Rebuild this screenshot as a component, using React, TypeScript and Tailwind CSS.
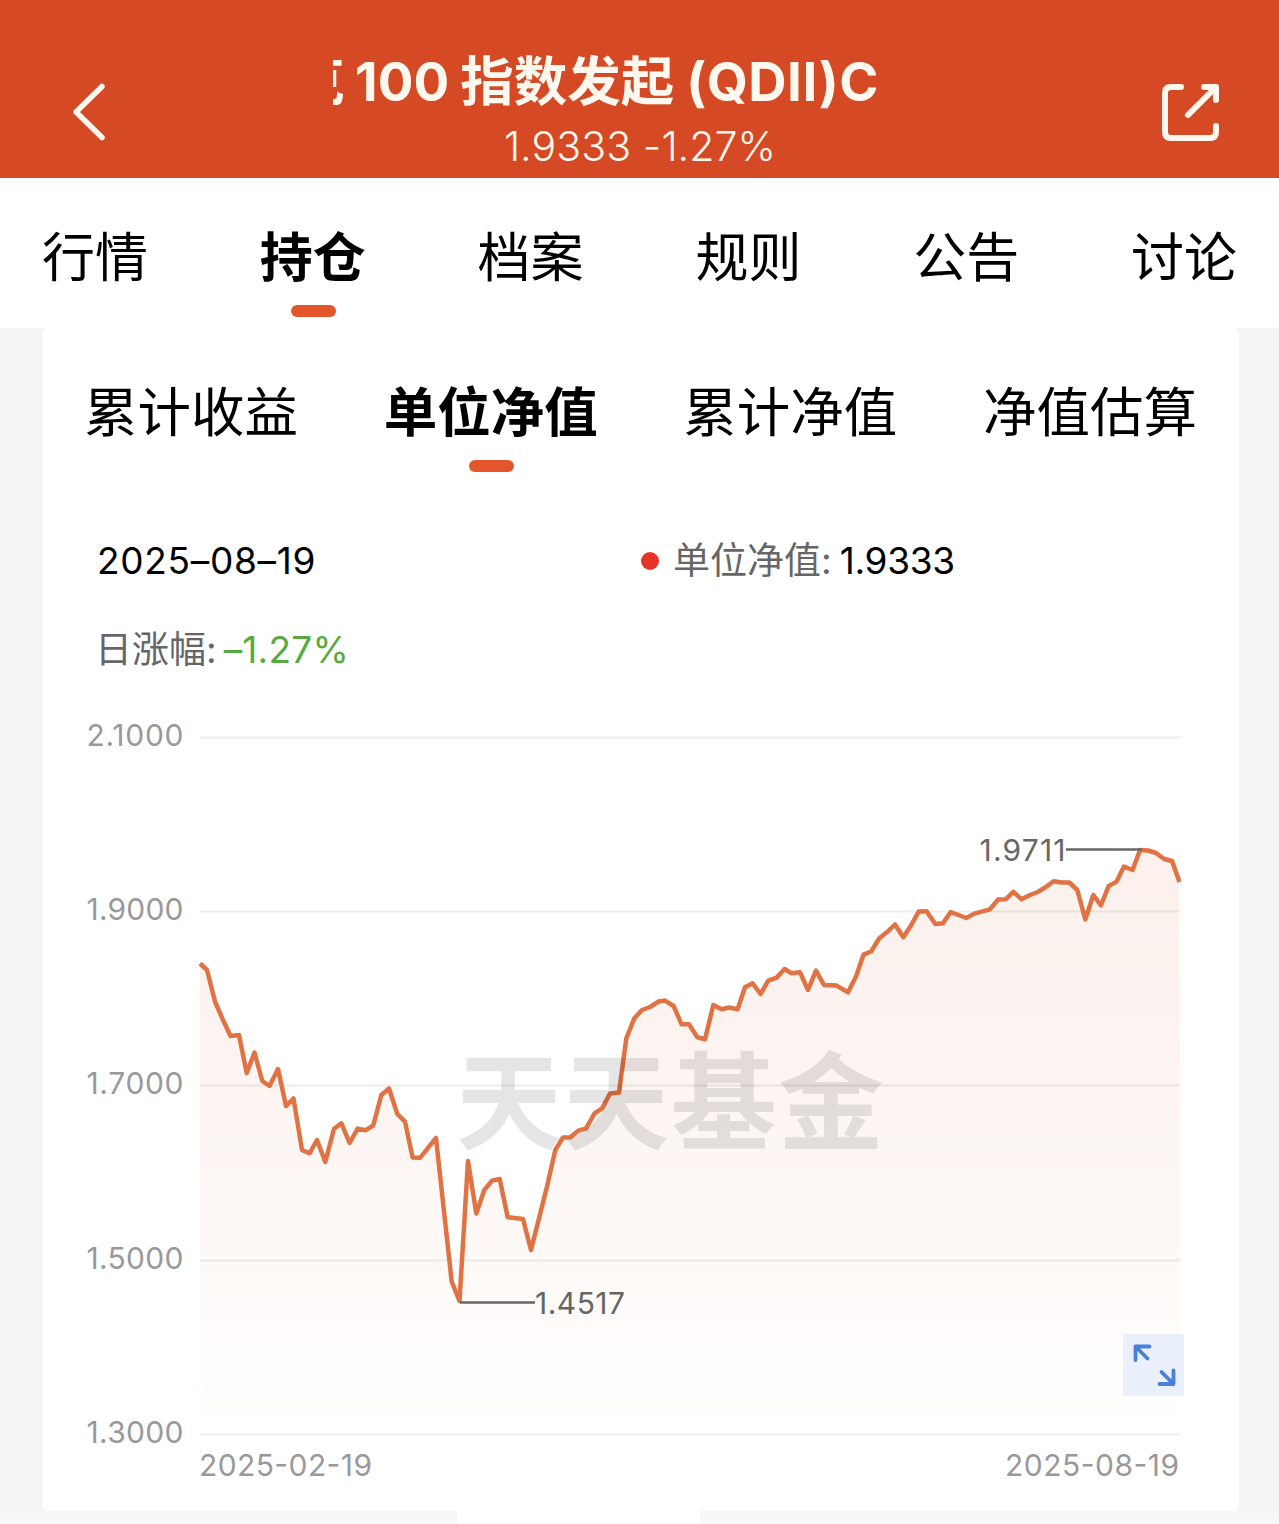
import React from "react";
import clsx from "clsx";

const TABS = ["行情", "持仓", "档案", "规则", "公告", "讨论"];
const SUB_TABS = ["累计收益", "单位净值", "累计净值", "净值估算"];

const GRID = [
  { label: "2.1000", y: 37.5 },
  { label: "1.9000", y: 211.5 },
  { label: "1.7000", y: 385.5 },
  { label: "1.5000", y: 560.5 },
  { label: "1.3000", y: 734.5 },
];

// x, y pairs in chart space
const POINTS = [
  [158, 263.5], [165, 270], [173, 301.5], [181, 320], [188.5, 336], [197, 335], [204.7, 373], [212.5, 352.5],
  [220.3, 381], [227.5, 386], [236, 369], [244, 406], [251.5, 398.5], [260, 450], [267.5, 453.3], [275, 440],
  [283.3, 462], [292, 428.7], [299.4, 423.3], [307.6, 443], [315.6, 428.6], [323.4, 430.3], [331.3, 425.3],
  [339.3, 395], [347, 388.5], [355.3, 414], [363, 421.6], [370.6, 457.5], [378, 457.8], [394, 438], [409.7, 581.7],
  [417.5, 601], [426, 461], [434.3, 513.5], [442.3, 490], [450, 480.6], [457.7, 479], [465.7, 517.3], [481, 519],
  [489, 550], [505, 486.6], [513.3, 450], [521, 437.5], [528.3, 437.3], [536.3, 430.6], [544, 428.3], [552.6, 413.3],
  [560, 408.3], [568, 393.6], [577, 392.6], [584.3, 338.3], [592.3, 318.3], [600, 310], [608, 307], [616.3, 301.6],
  [623, 300.6], [631.6, 306], [639.6, 324.3], [647, 324.3], [655.3, 337.3], [663, 339.3], [671.3, 305], [679.6, 309.3],
  [687.3, 307.5], [695.6, 309.3], [703, 287.3], [710.6, 283.3], [718.6, 294], [726.3, 280.6], [734.6, 277.6],
  [742.6, 269], [749.6, 273.3], [758, 272.3], [766, 290], [774, 270.6], [782, 285], [794.6, 285.6], [806, 292.3],
  [814, 276.6], [821.6, 254.6], [829.3, 251.3], [837.3, 238.3], [845.6, 231.6], [853, 224.5], [861.3, 237.3],
  [869.3, 225], [876.6, 211.6], [884.6, 211.3], [893.3, 224], [901, 223.3], [908.6, 212], [924.3, 218], [932.3, 213.6],
  [948, 209.3], [956, 199.6], [963.6, 199.3], [971.3, 191.8], [979.6, 199.3], [988, 195], [995.6, 192], [1003, 187.6],
  [1011.6, 181.3], [1019.6, 182.5], [1027.3, 182.5], [1035.3, 190], [1043.3, 219.5], [1051.3, 195], [1059, 205.3],
  [1066.6, 186], [1074.6, 181.6], [1082, 166.6], [1090.6, 170], [1098, 150], [1106.3, 150.5], [1114, 153],
  [1122.3, 159], [1130, 161], [1137.5, 182],
];

const line = POINTS.map((p) => p.join(",")).join(" ");

const Header = () => (
  <header className="flex h-[178px] items-start justify-between bg-[#d54a25] pl-[72px] pr-[59px] text-[#fff8ef]">
    <svg className="mt-[82px] shrink-0" width="34" height="60" viewBox="0 0 34 60" fill="none">
      <path d="M30 4.500 L4 30 L30 55.500" stroke="currentColor" strokeWidth="5.500" strokeLinecap="round" strokeLinejoin="round" />
    </svg>

    {/* TITLE */}
    <div className="ml-[14px] flex flex-col items-center">
      <div className="mt-[46px] flex h-[72px] w-[614px] justify-end overflow-hidden pr-[68px] text-[53px] leading-[72px] font-bold whitespace-nowrap">
        <span>克</span>
        <span className="ml-[10px]">100</span>
        <span className="ml-[11px] text-[53.500px]">指数发起</span>
        <span className="ml-[12px] tracking-[0.5px]">(QDII)C</span>
      </div>
      <div className="mt-[2px] flex h-[52px] items-center text-[41px] font-light leading-[52px] tracking-[0.1px]">1.9333 -1.27%</div>
    </div>

    <svg className="mt-[82px] shrink-0" width="60" height="60" viewBox="0 0 60 60" fill="none" stroke="currentColor" strokeWidth="6" strokeLinecap="round" strokeLinejoin="round">
      <path d="M21 5H11Q5 5 5 11V50Q5 56 11 56H50Q56 56 56 50V44" />
      <path d="M28 33L54 7" />
      <path d="M44 5H56V18" />
    </svg>
  </header>
);

interface TabProps {
  label: string;
  active: boolean;
}

const Tab = ({ label, active }: TabProps) => (
  <div className="flex flex-col items-center">
    <span className={clsx("leading-[80px]", active ? "font-bold" : "font-normal")}>{label}</span>
    {active && <span className="mt-[7px] ml-[2px] h-[12px] w-[45px] rounded-full bg-[#e4552c]" />}
  </div>
);

const Chart = () => (
  <svg className="block" width="1197" height="811" viewBox="0 0 1197 811">
    <defs>
      <linearGradient id="area" x1="0" y1="150" x2="0" y2="734" gradientUnits="userSpaceOnUse">
        <stop offset="0" stopColor="#fbf0ec" />
        <stop offset="0.35" stopColor="#fcf4f1" />
        <stop offset="0.75" stopColor="#fefaf8" />
        <stop offset="1" stopColor="#ffffff" />
      </linearGradient>
    </defs>

    <polygon points={`158,734 ${line} 1138,734`} fill="url(#area)" />

    {GRID.map((g) => (
      <g key={g.label}>
        <line x1="158" x2="1138" y1={g.y} y2={g.y} stroke="#000" strokeOpacity="0.07" strokeWidth="2" />
        <text x="44.500" y={g.y + 8.5} fontSize="30" fill="#999" textLength="97">
          {g.label}
        </text>
      </g>
    ))}

    <polyline points={line} fill="none" stroke="#e07243" strokeWidth="4.500" strokeLinejoin="round" />

    {/* WATERMARK */}
    <text x="414" y="441" fontSize="106" fontWeight="700" fill="#000" fillOpacity="0.1" textLength="428">
      天天基金
    </text>

    {/* MAX / MIN */}
    <line x1="1024" x2="1100" y1="149.500" y2="149.500" stroke="#666" strokeWidth="2.500" />
    <text x="937.500" y="161" fontSize="30" fill="#666" textLength="86">
      1.9711
    </text>
    <line x1="418" x2="493" y1="602.500" y2="602.500" stroke="#666" strokeWidth="2.500" />
    <text x="493" y="614" fontSize="30" fill="#666" textLength="90">
      1.4517
    </text>

    <text x="157" y="776" fontSize="30" fill="#999" textLength="173">
      2025-02-19
    </text>
    <text x="963" y="776" fontSize="30" fill="#999" textLength="174">
      2025-08-19
    </text>

    {/* EXPAND */}
    <rect x="1081" y="634" width="61" height="62" rx="2" fill="#e9f0fb" />
    <g fill="none" stroke="#4a80d8" strokeWidth="3.800" strokeLinecap="round" strokeLinejoin="round">
      <path d="M1107.500 646.500H1093.500V660M1094 647L1105.500 658.500" />
      <path d="M1117.500 684H1131.500V670.500M1131 683.500L1119.500 672" />
    </g>
  </svg>
);

const App = () => {
  return (
    <div className="h-[1524px] w-[1279px] overflow-hidden bg-[#f4f4f4] font-['Inter','Noto_Sans_CJK_SC',sans-serif] text-black">
      <Header />

      <nav className="flex h-[150px] justify-between bg-white px-[42px] pt-[40px] text-[53px]">
        {TABS.map((t) => (
          <Tab key={t} label={t} active={t === "持仓"} />
        ))}
      </nav>

      <main className="mr-[40px] ml-[42px] h-[1183px] rounded-md bg-white">
        <div className="flex h-[182px] justify-between px-[42px] pt-[45px] text-[53.500px]">
          {SUB_TABS.map((t) => (
            <Tab key={t} label={t} active={t === "单位净值"} />
          ))}
        </div>

        <div className="grid h-[190px] grid-cols-[543px_1fr] grid-rows-[100px_78px] pt-[1px] pl-[55px] text-[37px] leading-[100px]">
          <div className="tracking-[0.7px]">2025–08–19</div>
          <div className="flex items-center">
            <span className="mr-[14px] ml-[1px] size-[18px] rounded-full bg-[#e5332a]" />
            <span className="text-[#666]">单位净值:</span>
            <span className="ml-[8px] tracking-[-0.3px]">1.9333</span>
          </div>
          <div className="-ml-[2px] flex items-center">
            <span className="text-[#666]">日涨幅:</span>
            <span className="ml-[7px] tracking-[0.2px] text-[#57ab3e]">–1.27%</span>
          </div>
        </div>

        <Chart />
      </main>

      <div className="flex h-[13px] bg-[#f7f7f7] pl-[457px]">
        <div className="w-[243px] bg-white" />
      </div>
    </div>
  );
};

export default App;
